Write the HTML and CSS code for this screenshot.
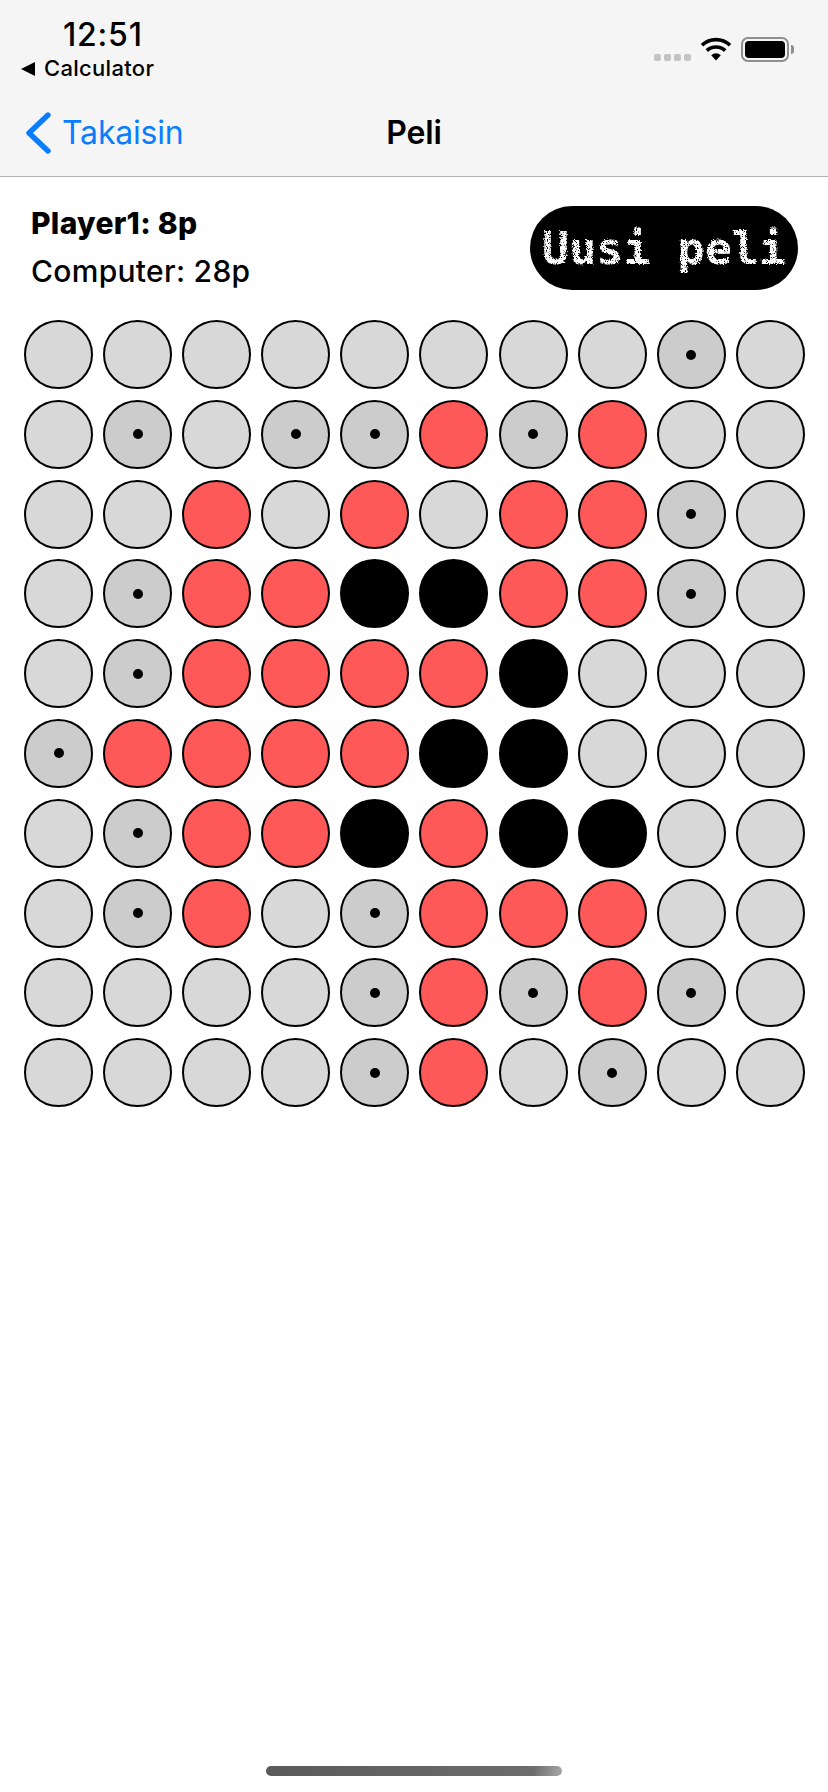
FILE: index.html
```html
<!DOCTYPE html>
<html lang="en">
<head>
  <meta charset="UTF-8" />
  <meta name="viewport" content="width=device-width, initial-scale=1" />
  <title>Peli</title>
  <link rel="stylesheet" href="styles.css">
</head>
<body>
  <header class="top">
    <div class="status">
      <div class="status-left">
        <div class="time">12:51</div>
        <div class="back-app"><span class="back-arrow"></span>Calculator</div>
      </div>
      <div class="status-right">
        <div class="signal"><i></i><i></i><i></i><i></i></div>
        <svg class="wifi" width="32" height="24" viewBox="0 0 32 24">
          <path d="M16 23.5 11.2 18.2a7 7 0 0 1 9.6 0Z" fill="#000"/>
          <path d="M6.8 13.6a13.4 13.4 0 0 1 18.4 0" fill="none" stroke="#000" stroke-width="3.6"/>
          <path d="M2 8.2a20.4 20.4 0 0 1 28 0" fill="none" stroke="#000" stroke-width="3.6"/>
        </svg>
        <div class="battery"><div class="battery-fill"></div></div>
        <div class="battery-nub"></div>
      </div>
    </div>
    <nav class="navbar">
      <a class="nav-back">
        <svg width="26" height="42" viewBox="0 0 26 42">
          <path d="M23 3 4 21l19 18" fill="none" stroke="#087eff" stroke-width="5.4" stroke-linecap="round" stroke-linejoin="round"/>
        </svg>
        Takaisin
      </a>
      <div class="nav-title">Peli</div>
    </nav>
  </header>

  <section class="scores">
    <div>
      <div class="score score-active">Player1: 8p</div>
      <div class="score">Computer: 28p</div>
    </div>
    <button class="new-game"><span class="chalk">Uusi peli</span></button>
  </section>

  <!-- Chalk grain for the button label -->
  <svg class="defs" width="0" height="0">
    <filter id="chalk" x="-5%" y="-10%" width="110%" height="120%">
      <feTurbulence type="fractalNoise" baseFrequency="0.7" numOctaves="2" seed="4" result="noise"/>
      <feDisplacementMap in="SourceGraphic" in2="noise" scale="4" result="rough"/>
      <feTurbulence type="fractalNoise" baseFrequency="1.1" numOctaves="1" seed="9"/>
      <feColorMatrix values="0 0 0 0 1  0 0 0 0 1  0 0 0 0 1  0 0 0 -9 6.2" result="grain"/>
      <feComposite in="rough" in2="grain" operator="in"/>
    </filter>
  </svg>

  <main class="board">
    <div class="cell"></div><div class="cell"></div><div class="cell"></div><div class="cell"></div><div class="cell"></div><div class="cell"></div><div class="cell"></div><div class="cell"></div><div class="cell hint"></div><div class="cell"></div>
    <div class="cell"></div><div class="cell hint"></div><div class="cell"></div><div class="cell hint"></div><div class="cell hint"></div><div class="cell red"></div><div class="cell hint"></div><div class="cell red"></div><div class="cell"></div><div class="cell"></div>
    <div class="cell"></div><div class="cell"></div><div class="cell red"></div><div class="cell"></div><div class="cell red"></div><div class="cell"></div><div class="cell red"></div><div class="cell red"></div><div class="cell hint"></div><div class="cell"></div>
    <div class="cell"></div><div class="cell hint"></div><div class="cell red"></div><div class="cell red"></div><div class="cell black"></div><div class="cell black"></div><div class="cell red"></div><div class="cell red"></div><div class="cell hint"></div><div class="cell"></div>
    <div class="cell"></div><div class="cell hint"></div><div class="cell red"></div><div class="cell red"></div><div class="cell red"></div><div class="cell red"></div><div class="cell black"></div><div class="cell"></div><div class="cell"></div><div class="cell"></div>
    <div class="cell hint"></div><div class="cell red"></div><div class="cell red"></div><div class="cell red"></div><div class="cell red"></div><div class="cell black"></div><div class="cell black"></div><div class="cell"></div><div class="cell"></div><div class="cell"></div>
    <div class="cell"></div><div class="cell hint"></div><div class="cell red"></div><div class="cell red"></div><div class="cell black"></div><div class="cell red"></div><div class="cell black"></div><div class="cell black"></div><div class="cell"></div><div class="cell"></div>
    <div class="cell"></div><div class="cell hint"></div><div class="cell red"></div><div class="cell"></div><div class="cell hint"></div><div class="cell red"></div><div class="cell red"></div><div class="cell red"></div><div class="cell"></div><div class="cell"></div>
    <div class="cell"></div><div class="cell"></div><div class="cell"></div><div class="cell"></div><div class="cell hint"></div><div class="cell red"></div><div class="cell hint"></div><div class="cell red"></div><div class="cell hint"></div><div class="cell"></div>
    <div class="cell"></div><div class="cell"></div><div class="cell"></div><div class="cell"></div><div class="cell hint"></div><div class="cell red"></div><div class="cell"></div><div class="cell hint"></div><div class="cell"></div><div class="cell"></div>
  </main>

  <div class="home-bar"></div>
</body>
</html>
```

FILE: styles.css
```css
body {
  margin: 0;
  height: 1792px;
  position: relative;
  overflow: hidden;
  font-family: Inter, "Noto Sans", sans-serif;
  background: #fff;
  color: #000;
}

/* --- TOP BARS --- */
.top {
  height: 176px;
  background: #f6f5f6;
  border-bottom: 1px solid #b2b2b2;
}
.status {
  height: 88px;
  display: flex;
  justify-content: space-between;
}
.status-left {
  padding: 17px 0 0 21px;
}
.time {
  font-size: 32px;
  line-height: 36px;
  font-weight: 500;
  letter-spacing: 0.8px;
  padding-left: 42px;
}
.back-app {
  display: flex;
  align-items: center;
  font-size: 22px;
  line-height: 31px;
  font-weight: 500;
  letter-spacing: 0.3px;
}
.back-arrow {
  width: 0;
  height: 0;
  border-top: 7px solid transparent;
  border-bottom: 7px solid transparent;
  border-right: 14px solid #000;
  margin-right: 9px;
}
.status-right {
  display: flex;
  align-items: flex-start;
  padding: 37px 34px 0 0;
}
.signal {
  display: flex;
  gap: 3px;
  margin: 17px 9px 0 0;
}
.signal i {
  width: 7px;
  height: 7px;
  border-radius: 2px;
  background: #c4c4c4;
}
.wifi {
  margin-right: 9px;
}
.battery {
  width: 48px;
  height: 25px;
  box-sizing: border-box;
  border: 2px solid #8f8f8f;
  border-radius: 7px;
  padding: 2px;
}
.battery-fill {
  height: 100%;
  background: #000;
  border-radius: 4px;
}
.battery-nub {
  width: 3px;
  height: 9px;
  margin: 8px 0 0 2px;
  background: #8f8f8f;
  border-radius: 0 3px 3px 0;
}
.navbar {
  height: 88px;
  position: relative;
  display: flex;
  align-items: center;
  justify-content: center;
}
.nav-back {
  position: absolute;
  left: 25px;
  top: 24px;
  display: flex;
  align-items: center;
  gap: 11px;
  color: #087eff;
  font-size: 32px;
  line-height: 42px;
  letter-spacing: -0.2px;
}
.nav-title {
  font-size: 32px;
  font-weight: 600;
  letter-spacing: -0.1px;
}

/* --- SCORES + BUTTON --- */
.scores {
  display: flex;
  justify-content: space-between;
  align-items: flex-start;
  padding: 22px 30px 0 31px;
}
.score {
  font-size: 30px;
  line-height: 48px;
  font-weight: 500;
  letter-spacing: 0.3px;
}
.score-active {
  font-weight: 800;
}
.new-game {
  width: 268px;
  height: 84px;
  margin-top: 7px;
  border: none;
  border-radius: 42px;
  padding: 0;
  background: #000;
  color: #fff;
  font-family: "DejaVu Sans Mono", monospace;
  font-size: 45px;
  font-weight: 700;
  white-space: nowrap;
}
.chalk {
  display: inline-block;
  filter: url(#chalk);
}
.defs {
  position: absolute;
}

/* --- BOARD --- */
.board {
  display: grid;
  grid-template-columns: repeat(10, 69px);
  grid-auto-rows: 69px;
  column-gap: 10.1px;
  row-gap: 10.8px;
  padding: 25px 0 0 24px;
}
.cell {
  box-sizing: border-box;
  border: 2px solid #000;
  border-radius: 50%;
  background: #d8d8d8;
  display: flex;
  align-items: center;
  justify-content: center;
}
.hint {
  background: #cccccc;
}
.hint::after {
  content: "";
  width: 10px;
  height: 10px;
  border-radius: 50%;
  background: #000;
}
.red {
  background: #ff5858;
}
.black {
  background: #000;
}

/* Home indicator */
.home-bar {
  position: absolute;
  left: 266px;
  top: 1766px;
  width: 296px;
  height: 10px;
  border-radius: 5px;
  background: linear-gradient(100deg, #5a5a5a 0%, #6c6c6c 90%, #a8a8a8 100%);
}
```
